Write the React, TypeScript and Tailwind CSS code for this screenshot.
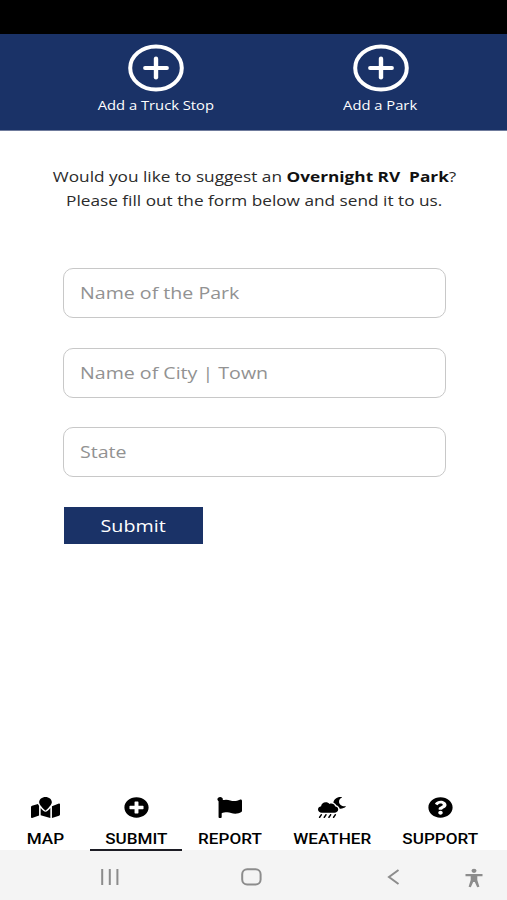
import React from 'react'
import { FaMapMarked, FaPlusCircle, FaFlag, FaCloudMoonRain, FaQuestionCircle } from 'react-icons/fa'

const tabs = [
  { label: 'MAP', icon: FaMapMarked, cell: 'w-[90px]', size: 'w-[29px]' },
  { label: 'SUBMIT', icon: FaPlusCircle, cell: 'w-[92px]', size: 'w-[25px]', active: true },
  { label: 'REPORT', icon: FaFlag, cell: 'w-[95px]', size: 'w-[25px]' },
  { label: 'WEATHER', icon: FaCloudMoonRain, cell: 'w-[110px]', size: 'w-[28px]' },
  { label: 'SUPPORT', icon: FaQuestionCircle, cell: 'w-[107px]', size: 'w-[25px]' }
]

const fields = ['Name of the Park', 'Name of City | Town', 'State']

function AddButton({ label }: { label: string }) {
  return (
    <button className="flex w-[225px] flex-col items-center text-white">
      <svg className="h-[48px] w-[56px]" viewBox="0 0 56 48" fill="none" stroke="currentColor" strokeLinecap="round">
        <ellipse cx="28" cy="24" rx="25.8" ry="21.6" strokeWidth="4" />
        <path d="M17 24H39" strokeWidth="3.8" />
        <path d="M28 14.8V33.2" strokeWidth="4.4" />
      </svg>
      <span className="mt-[5px] scale-x-[1.19] whitespace-nowrap text-[12.4px] leading-[18px]">{label}</span>
    </button>
  )
}

export default function App() {
  return (
    <div className="flex h-[900px] w-[507px] flex-col overflow-hidden bg-white font-['Open_Sans','Noto_Sans',sans-serif]">
      {/* Status bar */}
      <div className="h-[34px] shrink-0 bg-black" />

      {/* Header */}
      <header className="flex h-[97px] shrink-0 border-b border-[#6f7b9c] bg-[#1a3267] pl-[43px] pt-[9.5px]">
        <AddButton label="Add a Truck Stop" />
        <AddButton label="Add a Park" />
      </header>

      {/* Suggestion form */}
      <main className="flex flex-1 flex-col">
        <div className="mt-[34px] flex flex-col items-center whitespace-pre pl-[2px] text-[14.4px] leading-[24px] text-[#2b2b2b]">
          <p className="scale-x-[1.197]">
            Would you like to suggest an <span className="font-bold text-[#111]">Overnight RV  Park</span>?
          </p>
          <p className="scale-x-[1.197]">Please fill out the form below and send it to us.</p>
        </div>

        <form className="mt-[55px] flex flex-col items-start pl-[63px]">
          <div className="flex flex-col gap-[29.5px]">
            {fields.map((field) => (
              <div key={field} className="h-[50px] w-[383px] rounded-[10px] border border-[#c8c8c8] pb-px pl-[15.5px]">
                <input
                  type="text"
                  placeholder={field}
                  className="h-full w-[290px] origin-left scale-x-[1.195] bg-transparent text-[16.4px] outline-none placeholder:text-[#929292]"
                />
              </div>
            ))}
          </div>
          <button type="button" className="ml-px mt-[30px] h-[37px] w-[139px] bg-[#1a3267] pt-[2px] text-[16.4px] text-white">
            <span className="inline-block scale-x-[1.2]">Submit</span>
          </button>
        </form>
      </main>

      {/* Tab bar, its active underline overlaps the system bar by a pixel */}
      <nav className="relative z-10 -mb-px flex h-[63px] shrink-0 font-['Roboto',sans-serif] text-black">
        {tabs.map(({ label, icon: Icon, cell, size, active }) => (
          <div key={label} className={`${cell} flex flex-col items-center border-b-2 pt-[9px] ${active ? 'border-[#1c1c24]' : 'border-transparent'}`}>
            <Icon className={`h-[21px] ${size}`} preserveAspectRatio="none" />
            <span className="mt-[12px] scale-x-[1.14] text-[15px] font-medium leading-[18px]">{label}</span>
          </div>
        ))}
      </nav>

      {/* System navigation */}
      <div className="flex h-[50px] shrink-0 items-center bg-[#f4f4f4] pl-[100px] pt-[3px] text-[#8c8c8c]">
        <svg className="h-[16px] w-[20px]" viewBox="0 0 20 16" stroke="currentColor" strokeWidth="2">
          <path d="M2.2 0V16M9.8 0V16M17.4 0V16" />
        </svg>
        <svg className="ml-[121px] h-[18px] w-[21px]" viewBox="0 0 21 18" fill="none" stroke="currentColor" strokeWidth="2">
          <rect x="1.2" y="1.2" width="18.4" height="15.4" rx="5" />
        </svg>
        <svg className="ml-[125px] h-[16px] w-[13px]" viewBox="0 0 13 16" fill="none" stroke="currentColor" strokeWidth="2">
          <path d="M11.5 1L2 8L11.5 15" />
        </svg>
        <svg className="ml-[65px] mt-[3px] h-[20px] w-[18px]" viewBox="0 0 18 20" fill="currentColor">
          <ellipse cx="9" cy="2.8" rx="2.5" ry="2.1" />
          <path d="M0.5 6H17.5V8.2H12.3V12L14.4 18.7L12.2 19.2L9.8 14H8.2L5.8 19.2L3.6 18.7L5.7 12V8.2H0.5Z" />
        </svg>
      </div>
    </div>
  )
}
